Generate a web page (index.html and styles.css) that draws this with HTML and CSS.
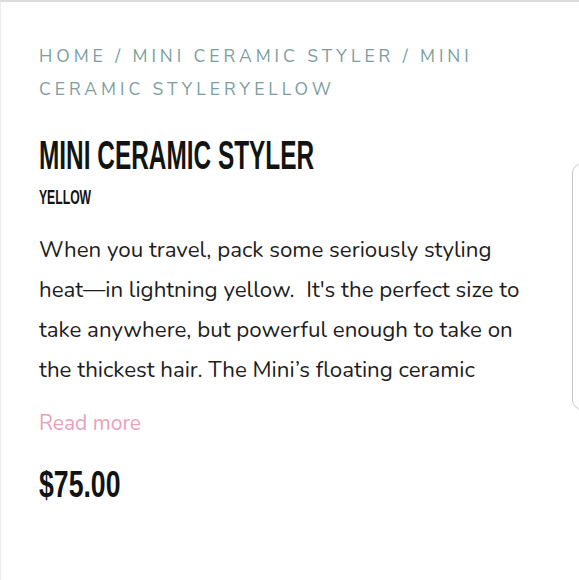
FILE: index.html
```html
<!DOCTYPE html>
<html>
<head>
<meta charset="utf-8">
<link rel="stylesheet" href="styles.css">
</head>
<body>
<div class="page">
  <nav class="crumbs">HOME / MINI CERAMIC STYLER / MINI CERAMIC STYLERYELLOW</nav>
  <h1 class="title"><span class="cond">MINI CERAMIC STYLER</span></h1>
  <div class="variant"><span class="cond">YELLOW</span></div>
  <p class="desc">When you travel, pack some seriously styling heat&#8288;—&#8288;in lightning yellow.&nbsp; It's the perfect size to take anywhere, but powerful enough to take on the thickest hair. The Mini’s floating ceramic</p>
  <a class="more" href="#">Read more</a>
  <div class="price"><span class="cond">$75.00</span></div>
</div>
<div class="handle"></div>
</body>
</html>
```

FILE: styles.css
```css
html, body {
  margin: 0;
  padding: 0;
  background: #fff;
}
body {
  width: 579px;
  height: 580px;
  overflow: hidden;
  position: relative;
  box-sizing: border-box;
  border-top: 2px solid #dcdcdc;
  border-left: 1px solid #ececec;
}
.page {
  padding: 38px 40px 0 38px;
}
.crumbs {
  font-family: "Nunito Sans", Lato, "Open Sans", sans-serif;
  font-size: 17.5px;
  letter-spacing: 3.95px;
  line-height: 33px;
  color: #7c9e9d;
  width: 480px;
}
.cond {
  display: inline-block;
  transform-origin: 0 50%;
}
.title {
  margin: 29px 0 0;
  font-family: "Liberation Sans", Arial, sans-serif;
  font-weight: bold;
  font-size: 41px;
  line-height: 40px;
  color: #121414;
  white-space: nowrap;
}
.title .cond {
  transform: scaleX(0.595);
}
.variant {
  margin-top: 9px;
  font-family: "Liberation Sans", Arial, sans-serif;
  font-weight: bold;
  font-size: 21px;
  line-height: 26px;
  color: #121414;
}
.variant .cond {
  transform: scaleX(0.58);
}
.desc {
  margin: 20px 0 0;
  font-family: Nunito, Lato, "Open Sans", sans-serif;
  font-size: 22.3px;
  line-height: 40px;
  color: #1e1e1e;
  width: 492px;
}
.more {
  display: block;
  margin-top: 19px;
  font-family: Nunito, Roboto, sans-serif;
  font-size: 21px;
  line-height: 28px;
  color: #eaa1ba;
  text-decoration: none;
}
.price {
  margin-top: 28px;
  font-family: "Liberation Sans", Arial, sans-serif;
  font-weight: bold;
  font-size: 37px;
  line-height: 40px;
  color: #121414;
}
.price .cond {
  transform: scaleX(0.72);
}
.handle {
  position: absolute;
  left: 571px;
  top: 161px;
  width: 20px;
  height: 247px;
  border: 1.5px solid #c8c8c8;
  border-radius: 10px;
  box-sizing: border-box;
}
```
